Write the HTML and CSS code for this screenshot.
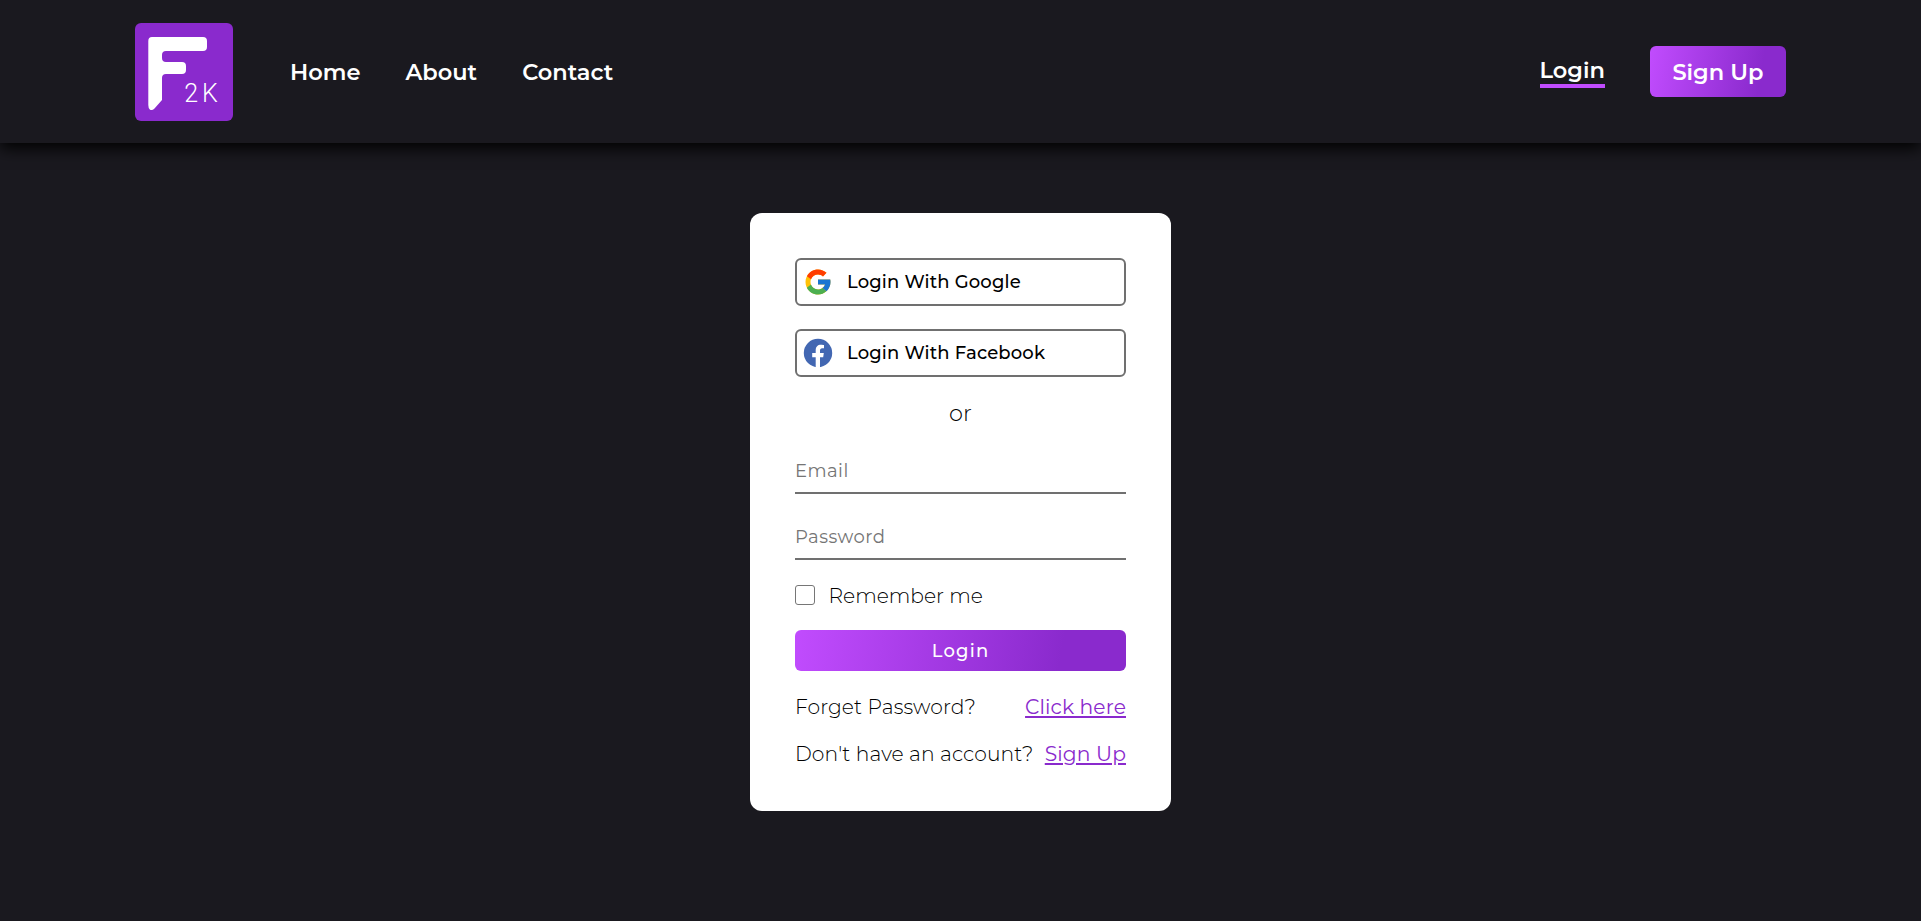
FILE: index.html
```html
<!DOCTYPE html>
<html lang="en">
<head>
<meta charset="utf-8">
<title>Login</title>
<link rel="stylesheet" href="styles.css">
</head>
<body>
<header class="header">
  <a class="logo" href="#" aria-label="F2K">
    <svg width="98" height="98" viewBox="0 0 98 98">
      <rect width="98" height="98" rx="6" fill="#8a2acd"/>
      <path d="M17 14H68Q72 14 72 18V24Q72 28 68 28H31Q27 28 27 32V35Q27 39 31 39H47Q51 39 51 43V47Q51 51 47 51H31Q27 51 27 55V77L19.500 85.500Q17 88 14.800 86.500Q13.300 85 13.300 82V18Q13.300 14 17 14Z" fill="#fff"/>
      <text class="logo-text" x="49.300" y="78.500">2</text>
      <text class="logo-text" x="67" y="78.500">K</text>
    </svg>
  </a>
  <nav class="nav">
    <a class="nav-link" href="#">Home</a>
    <a class="nav-link" href="#">About</a>
    <a class="nav-link" href="#">Contact</a>
  </nav>
  <div class="actions">
    <a class="nav-link login-link" href="#">Login</a>
    <a class="nav-link signup" href="#">Sign Up</a>
  </div>
</header>
<main class="main">
  <form class="card">
    <button class="social" type="button">
      <svg width="30" height="30" viewBox="0 0 48 48">
        <path fill="#FFC107" d="M43.611 20.083H42V20H24v8h11.303c-1.649 4.657-6.080 8-11.303 8-6.627 0-12-5.373-12-12s5.373-12 12-12c3.059 0 5.842 1.154 7.961 3.039l5.657-5.657C34.046 6.053 29.268 4 24 4 12.955 4 4 12.955 4 24s8.955 20 20 20 20-8.955 20-20c0-1.341-.138-2.650-.389-3.917z"/>
        <path fill="#FF3D00" d="M6.306 14.691l6.571 4.819C14.655 15.108 18.961 12 24 12c3.059 0 5.842 1.154 7.961 3.039l5.657-5.657C34.046 6.053 29.268 4 24 4 16.318 4 9.656 8.337 6.306 14.691z"/>
        <path fill="#4CAF50" d="M24 44c5.166 0 9.860-1.977 13.409-5.192l-6.190-5.238C29.211 35.091 26.715 36 24 36c-5.202 0-9.619-3.317-11.283-7.946l-6.522 5.025C9.505 39.556 16.227 44 24 44z"/>
        <path fill="#1976D2" d="M43.611 20.083H42V20H24v8h11.303c-.792 2.237-2.231 4.166-4.087 5.571l6.193 5.238C36.971 39.205 44 34 44 24c0-1.341-.138-2.650-.389-3.917z"/>
      </svg>
      <span>Login With Google</span>
    </button>
    <button class="social" type="button">
      <svg width="30" height="30" viewBox="0 0 30 30">
        <circle cx="15" cy="15" r="14.200" fill="#4267b2"/>
        <path fill="#fff" d="M12.700 30V19.200H9.200V15.100H12.700V12.100C12.700 8.600 14.800 6.700 17.900 6.700C19.400 6.700 21 7 21 7V10.300H19.200C17.500 10.300 17 11.400 17 12.500V15.100H20.800L20.200 19.200H17V30Z"/>
      </svg>
      <span>Login With Facebook</span>
    </button>
    <p class="or">or</p>
    <input class="field" type="text" placeholder="Email">
    <input class="field" type="password" placeholder="Password">
    <label class="remember"><input class="check" type="checkbox"><span>Remember me</span></label>
    <button class="submit" type="button">Login</button>
    <p class="row"><span>Forget Password?</span><a class="link" href="#">Click here</a></p>
    <p class="row"><span>Don't have an account?</span><a class="link" href="#">Sign Up</a></p>
  </form>
</main>
</body>
</html>
```
FILE: styles.css
```css
* { box-sizing: border-box; margin: 0; padding: 0; }
body {
  min-height: 921px;
  background: #1a191f;
  font-family: Montserrat, Inter, "Liberation Sans", sans-serif;
  color: #000;
  overflow: hidden;
}
a { color: inherit; text-decoration: none; }
.header {
  display: flex;
  align-items: center;
  height: 143px;
  padding: 0 135px;
  color: #fff;
  box-shadow: 0 5px 15px #000;
}
.logo, .logo svg { display: block; }
.logo-text { font: 300 25px Roboto, sans-serif; fill: #fff; }
.nav { display: flex; gap: 45px; margin-left: 57px; padding-top: 1px; }
.nav-link {
  font-size: 22.500px;
  font-weight: 600;
  line-height: 28px;
  white-space: nowrap;
}
.actions { display: flex; align-items: center; gap: 45px; margin-left: auto; }
.login-link { padding-bottom: 1px; padding-top: 1px; border-bottom: 4px solid #c14cfe; line-height: 26px; }
.signup {
  height: 51px;
  padding: 0 22.500px;
  line-height: 52px;
  border-radius: 6px;
  background: linear-gradient(100deg, #c14cfe, #8a2acd 80%);
}
.main { display: flex; justify-content: center; padding-top: 70px; }
.card {
  display: flex;
  flex-direction: column;
  width: 421px;
  height: 598px;
  padding: 45px;
  border-radius: 12px;
  background: #fff;
}
.social {
  display: flex;
  align-items: center;
  gap: 14px;
  height: 48px;
  margin-bottom: 23px;
  padding: 0 6px 1px;
  border: 2px solid #707070;
  border-radius: 6px;
  background: #fff;
  font: 500 18px Montserrat, Inter, sans-serif;
  letter-spacing: 0.150px;
  color: #000;
  white-space: nowrap;
}
.or { height: 28px; font-size: 22.500px; line-height: 26px; font-weight: 300; text-align: center; }
.field {
  height: 45px;
  margin-top: 21px;
  border: 0;
  border-bottom: 2px solid #707070;
  border-radius: 0;
  font: 400 18px Montserrat, Inter, sans-serif;
  letter-spacing: 0.450px;
  outline: 0;
}
.field::placeholder { color: #757575; opacity: 1; }
.remember { display: flex; align-items: center; gap: 13.500px; height: 24px; margin-top: 23px; font-size: 20.250px; font-weight: 300; white-space: nowrap; }
.check { width: 20px; height: 20px; border: 1.5px solid #767676; border-radius: 3px; appearance: none; }
.submit {
  height: 41px;
  margin-top: 23px;
  border: 0;
  border-radius: 6px;
  background: linear-gradient(100deg, #c14cfe, #8a2acd 80%);
  color: #fff;
  font: 500 18px Montserrat, Inter, sans-serif;
  letter-spacing: 1.200px;
}
.row { display: flex; justify-content: space-between; height: 24px; margin-top: 23px; font-size: 20.250px; line-height: 24px; white-space: nowrap; font-weight: 300; letter-spacing: 0.100px; }
.submit + .row { margin-top: 24px; }
.link { color: #8a2acd; font-weight: 400; text-decoration: underline; text-decoration-thickness: 2px; text-underline-offset: 2px; }
```
